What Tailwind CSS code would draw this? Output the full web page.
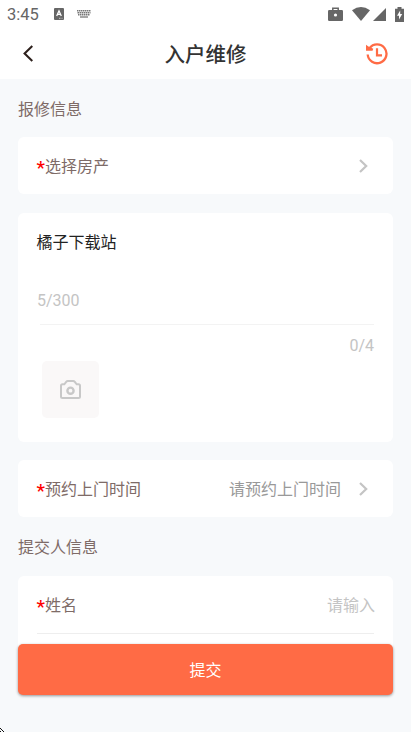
<!DOCTYPE html>
<html lang="zh-CN">
<head>
<meta charset="utf-8">
<meta name="viewport" content="width=device-width, initial-scale=1">
<title>入户维修</title>
<script src="https://cdn.jsdelivr.net/npm/@tailwindcss/browser@4"></script>
</head>
<body class="h-[732px] overflow-hidden bg-[#f7f9fb] font-[Roboto,'Noto_Sans_CJK_SC',sans-serif] text-base leading-6 text-[#7e6b67]">
<div class="relative flex h-[732px] flex-col overflow-hidden">
  <header class="h-[79px] shrink-0 bg-white">
    <div class="flex h-7 items-center pl-[7px] pr-[7px] text-[#666]">
      <span class="pt-px text-[16.5px] leading-7">3:45</span>
      <svg class="ml-[15px] h-3 w-[10px]" viewBox="0 0 10 12"><rect width="10" height="12" rx="1" fill="#666"/><path d="M2.7 8 5 2.8 7.3 8M3.5 6.4h3" fill="none" stroke="#fff" stroke-width="1.3"/><path d="M5 10.3h3.5" stroke="#ddd" stroke-width=".8" stroke-dasharray="1 .5"/></svg>
      <svg class="ml-[13px] h-2 w-[14px]" viewBox="0 0 14 8"><path d="M0 .8h14M.5 2.8h13M1 4.8h12" stroke="#777" stroke-width="1.5" stroke-dasharray="1.5 .5"/><path d="M3 7h8" stroke="#777" stroke-width="1.3"/></svg>
      <svg class="ml-auto h-[14px] w-[15px]" viewBox="0 0 15 14"><path d="M4.8 3V1.2h5.4V3" fill="none" stroke="#666" stroke-width="1.5"/><rect y="3" width="15" height="11" rx="1.2" fill="#666"/><circle cx="7.5" cy="8" r="1.6" fill="#fff"/></svg>
      <svg class="ml-[9px] h-[14px] w-[18px]" viewBox="0 0 18 14"><path d="M0 3.2Q9-3 18 3.2L9 14Z" fill="#666"/></svg>
      <svg class="ml-[3px] h-[13px] w-[13px]" viewBox="0 0 13 13"><path d="M13 0v13H0Z" fill="#666"/></svg>
      <svg class="ml-[9px] h-[15px] w-[9px]" viewBox="0 0 9 15"><path d="M2.5 0h4v1.7H9V15H0V1.7h2.5Z" fill="#666"/><path d="M5.2 3.5 2 8.8h2v3.7L7.2 7H5.2Z" fill="#fff"/></svg>
    </div>
    <div class="grid h-[51px] grid-cols-[1fr_auto_1fr] items-center pl-[23px] pr-[23px]">
      <svg class="h-[17px] w-[10px]" viewBox="0 0 10 17"><path d="M9.3 1 1.6 8.5 9.3 16" fill="none" stroke="#2d201c" stroke-width="2.1"/></svg>
      <h1 class="pt-[2px] text-[20.5px] font-medium leading-7 text-[#333]">入户维修</h1>
      <svg class="h-[22px] w-[22px] justify-self-end" viewBox="0 0 22 22" fill="none" stroke="#ff6b45"><path d="M1.7 11.5A9.4 9.4 0 1 0 3.5 5.2" stroke-width="2.3"/><path d="M0 1.8 2.4 3.6 7.3 5.8 6.5 7.8 0 7.8Z" fill="#ff6b45" stroke="none"/><path d="M11 5.3v7h5" stroke-width="2.2"/></svg>
    </div>
  </header>

  <main class="flex flex-col px-[18px]">
    <h2 class="flex h-[58px] items-center pt-[3px]">报修信息</h2>
    <section class="flex h-[57px] items-center rounded-md bg-white pl-[18.5px] pr-[25px]">
      <span class="w-[8.5px] pt-[4px] text-[19px] font-medium leading-6 text-[#f00]">*</span><span class="pt-[2px]">选择房产</span>
      <svg class="ml-auto h-[14px] w-[9px]" viewBox="0 0 9 14"><path d="m1 1 6.2 6L1 13" fill="none" stroke="#c4c4c4" stroke-width="2.2"/></svg>
    </section>

    <section class="mt-[19px] flex h-[229px] flex-col rounded-md bg-white px-[19px] pt-[18px]">
      <p class="-ml-[.5px] text-[#222]">橘子下载站</p>
      <p class="mt-[34px] text-[#c4c4c4]">5/300</p>
      <div class="ml-[3px] mt-[11px] h-px bg-[#f3f3f3]"></div>
      <p class="mt-[9px] text-right text-[#c4c4c4]">0/4</p>
      <div class="ml-[5px] mt-[3px] flex h-[57px] w-[57px] items-center justify-center rounded-[5px] bg-[#faf8f8]">
        <svg class="h-[19px] w-[21px]" viewBox="0 0 21 19" fill="none" stroke="#c8c8c8" stroke-width="2"><path d="M1 5.8Q1 4.3 2.5 4.3H4.3L6.2 1.8Q6.8 1 7.8 1H13.2Q14.2 1 14.8 1.8L16.7 4.3H18.5Q20 4.3 20 5.8V16.5Q20 18 18.5 18H2.5Q1 18 1 16.5Z"/><circle cx="10.5" cy="10.7" r="3.1" stroke-width="2.4"/></svg>
      </div>
    </section>

    <section class="mt-[18px] flex h-[57px] items-center rounded-md bg-white pl-[18.5px] pr-[25px]">
      <span class="w-[8.5px] pt-[4px] text-[19px] font-medium leading-6 text-[#f00]">*</span><span class="pt-[2px]">预约上门时间</span>
      <span class="ml-auto pt-[2px] text-[#999]">请预约上门时间</span>
      <svg class="ml-[18px] h-[14px] w-[9px]" viewBox="0 0 9 14"><path d="m1 1 6.2 6L1 13" fill="none" stroke="#c4c4c4" stroke-width="2.2"/></svg>
    </section>

    <h2 class="flex h-[59px] items-center pt-[2px]">提交人信息</h2>
    <section class="h-[116px] rounded-md bg-white px-[19px]">
      <div class="flex h-[58px] items-center border-b border-[#eee]">
        <span class="-ml-[.5px] w-[8.5px] pt-[4px] text-[19px] font-medium leading-6 text-[#f00]">*</span><span class="pt-[2px]">姓名</span>
        <span class="-mr-px ml-auto pt-[2px] text-[#c4c4c4]">请输入</span>
      </div>
    </section>
  </main>

  <footer class="absolute inset-x-0 bottom-0 h-[88px] px-[18px]">
    <button class="block h-[51px] w-full rounded-[5px] bg-[#ff6b45] pt-[2px] text-base text-white shadow-[0_1px_3px_rgba(0,0,0,0.4)]">提交</button>
  </footer>
  <svg class="absolute bottom-0 left-0 h-[4px] w-[5px]" viewBox="0 0 5 4"><path d="M0 0h1v1H0ZM1 1h1v1H1ZM2 2h1v1H2ZM3 3h1v1H3ZM0 3h1v1H0Z" fill="#111"/></svg>
</div>
</body>
</html>
